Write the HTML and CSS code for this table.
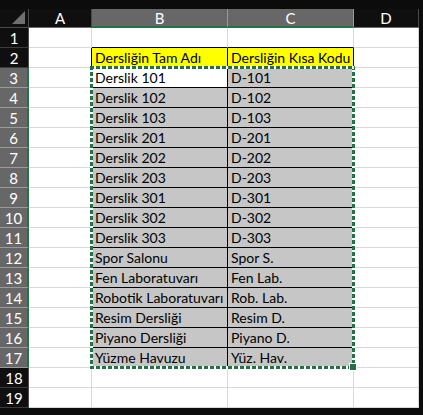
FILE: index.html
```html
<!DOCTYPE html>
<html lang="tr">
<head>
    <meta charset="UTF-8">
    <meta name="viewport" content="width=device-width, initial-scale=1.0">
    <title>Derslikler</title>
    <link rel="stylesheet" href="styles.css">
</head>
<body>
    <div class="window">
        <div class="sheet">
            <!-- column headers -->
            <div class="corner">
                <svg width="13" height="13" viewBox="0 0 13 13"><polygon points="0,13 13,0 13,13" fill="#6f6f6f"/></svg>
            </div>
            <div class="ch">A</div>
            <div class="ch sel">B</div>
            <div class="ch sel">C</div>
            <div class="ch">D</div>

            <!-- 1 -->
            <div class="rh">1</div>
            <div class="c"></div>
            <div class="c edge-b"></div>
            <div class="c edge-b"></div>
            <div class="c"></div>

            <!-- 2 -->
            <div class="rh">2</div>
            <div class="c edge-r"></div>
            <div class="c hd">Dersliğin Tam Adı</div>
            <div class="c hd">Dersliğin Kısa Kodu</div>
            <div class="c"></div>

            <div class="rh sel">3</div>
            <div class="c edge-r"></div>
            <div class="c dt act">Derslik 101</div>
            <div class="c dt">D-101</div>
            <div class="c"></div>

            <div class="rh sel">4</div>
            <div class="c edge-r"></div>
            <div class="c dt">Derslik 102</div>
            <div class="c dt">D-102</div>
            <div class="c"></div>

            <div class="rh sel">5</div>
            <div class="c edge-r"></div>
            <div class="c dt">Derslik 103</div>
            <div class="c dt">D-103</div>
            <div class="c"></div>

            <div class="rh sel">6</div>
            <div class="c edge-r"></div>
            <div class="c dt">Derslik 201</div>
            <div class="c dt">D-201</div>
            <div class="c"></div>

            <div class="rh sel">7</div>
            <div class="c edge-r"></div>
            <div class="c dt">Derslik 202</div>
            <div class="c dt">D-202</div>
            <div class="c"></div>

            <div class="rh sel">8</div>
            <div class="c edge-r"></div>
            <div class="c dt">Derslik 203</div>
            <div class="c dt">D-203</div>
            <div class="c"></div>

            <div class="rh sel">9</div>
            <div class="c edge-r"></div>
            <div class="c dt">Derslik 301</div>
            <div class="c dt">D-301</div>
            <div class="c"></div>

            <div class="rh sel">10</div>
            <div class="c edge-r"></div>
            <div class="c dt">Derslik 302</div>
            <div class="c dt">D-302</div>
            <div class="c"></div>

            <div class="rh sel">11</div>
            <div class="c edge-r"></div>
            <div class="c dt">Derslik 303</div>
            <div class="c dt">D-303</div>
            <div class="c"></div>

            <div class="rh sel">12</div>
            <div class="c edge-r"></div>
            <div class="c dt">Spor Salonu</div>
            <div class="c dt">Spor S.</div>
            <div class="c"></div>

            <div class="rh sel">13</div>
            <div class="c edge-r"></div>
            <div class="c dt">Fen Laboratuvarı</div>
            <div class="c dt">Fen Lab.</div>
            <div class="c"></div>

            <div class="rh sel">14</div>
            <div class="c edge-r"></div>
            <div class="c dt">Robotik Laboratuvarı</div>
            <div class="c dt">Rob. Lab.</div>
            <div class="c"></div>

            <div class="rh sel">15</div>
            <div class="c edge-r"></div>
            <div class="c dt">Resim Dersliği</div>
            <div class="c dt">Resim D.</div>
            <div class="c"></div>

            <div class="rh sel">16</div>
            <div class="c edge-r"></div>
            <div class="c dt">Piyano Dersliği</div>
            <div class="c dt">Piyano D.</div>
            <div class="c"></div>

            <div class="rh sel">17</div>
            <div class="c edge-r"></div>
            <div class="c dt">Yüzme Havuzu</div>
            <div class="c dt">Yüz. Hav.</div>
            <div class="c"></div>

            <div class="rh">18</div>
            <div class="c"></div>
            <div class="c"></div>
            <div class="c"></div>
            <div class="c"></div>

            <div class="rh">19</div>
            <div class="c"></div>
            <div class="c"></div>
            <div class="c"></div>
            <div class="c"></div>

            <!-- copy selection (marching ants) over B3:C17 -->
            <div class="ants"></div>
        </div>
    </div>
</body>
</html>
```

FILE: styles.css
```css
* { box-sizing: border-box; }

body {
    margin: 0;
    background: #0c0c0c;
    font-family: "Lato", "Open Sans", sans-serif;
    font-size: 14px;
}

.window {
    width: 423px;
    height: 415px;
    padding: 9px 4px 7px 0;
    background: #0c0c0c;
}

.sheet {
    position: relative;
    display: grid;
    grid-template-columns: 29px 63px 136px 126px 65px;
    grid-template-rows: 19px repeat(19, 20px);
}

.corner {
    display: flex;
    align-items: flex-end;
    justify-content: flex-end;
    padding: 0 3px 3px 0;
    background: #0f0f0f;
    border-right: 1px solid #4a4a4a;
    border-bottom: 1px solid #4a4a4a;
}

.ch {
    display: flex;
    align-items: center;
    justify-content: center;
    color: #fff;
    font-size: 15px;
    background: #0f0f0f;
    border-right: 1px solid #4a4a4a;
    border-bottom: 1px solid #6a6a6a;
}
.ch.sel {
    background: #676767;
    border-right-color: #9a9a9a;
    border-bottom: 2px solid #217346;
}

.rh {
    display: flex;
    align-items: center;
    justify-content: center;
    color: #fff;
    font-size: 15px;
    background: #0f0f0f;
    border-right: 1px solid #4a4a4a;
    border-bottom: 1px solid #3c3c3c;
    padding-top: 1px;
}
.rh.sel {
    background: #676767;
    border-right: 2px solid #217346;
    border-bottom-color: #9a9a9a;
}

.c {
    background: #fff;
    color: #000;
    border-right: 1px solid #d9d9d9;
    border-bottom: 1px solid #d9d9d9;
    padding: 0 3px;
    line-height: 20px;
    white-space: nowrap;
    overflow: hidden;
}
.c.edge-r { border-right-color: #000; }
.c.edge-b { border-bottom-color: #000; }
.c.hd {
    background: #ffff00;
    border-color: #000;
}
.c.dt {
    background: #c6c6c6;
    border-color: #000;
}
.c.dt.act { background: #fff; }

/* absolutely placed inside its grid area, so it stays out of auto-placement */
.ants {
    position: absolute;
    grid-column: 3 / 5;
    grid-row: 4 / 19;
    top: -2px;
    right: -1px;
    bottom: -1px;
    left: -2px;
    pointer-events: none;
    background:
        repeating-linear-gradient(90deg, #217346 0 4px, #fff 4px 6px) top / 100% 3px no-repeat,
        repeating-linear-gradient(90deg, #217346 0 4px, #fff 4px 6px) bottom / 100% 3px no-repeat,
        repeating-linear-gradient(180deg, #217346 0 4px, #fff 4px 6px) left / 3px 100% no-repeat,
        repeating-linear-gradient(180deg, #217346 0 4px, #fff 4px 6px) right / 3px 100% no-repeat;
}
.ants::after {
    content: "";
    position: absolute;
    right: -2px;
    bottom: -2px;
    width: 6px;
    height: 6px;
    background: #217346;
    border: 1px solid #fff;
}
```
